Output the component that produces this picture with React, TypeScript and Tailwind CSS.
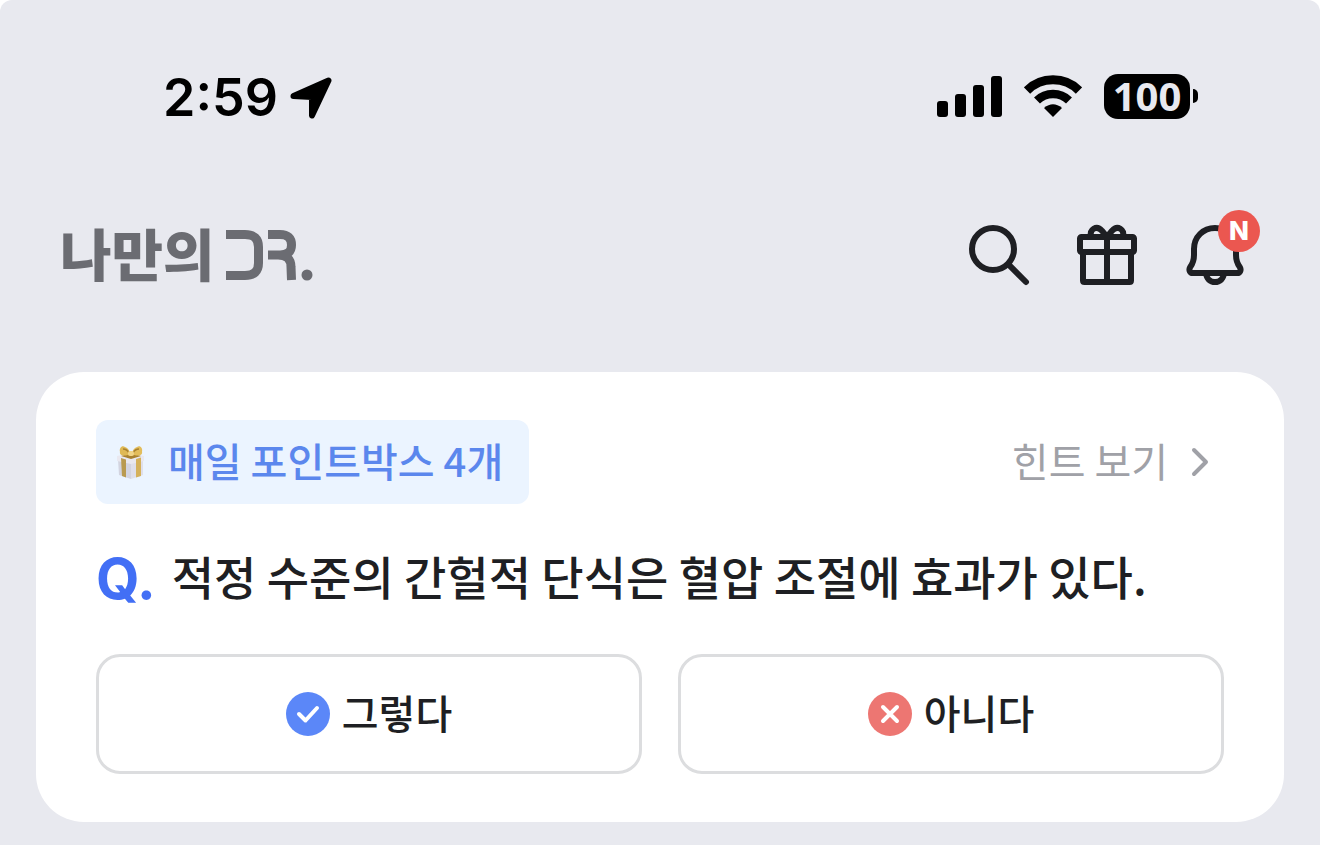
import React from "react";

interface AnswerButtonProps {
  label: string;
  children: React.ReactNode;
}

function AnswerButton({ label, children }: AnswerButtonProps) {
  return (
    <button
      type="button"
      className="flex h-[120px] items-center justify-center gap-3 rounded-3xl border-3 border-[#dcdddf] bg-white text-[40px] leading-[60px] font-medium"
    >
      {children}
      <span className="pb-1">{label}</span>
    </button>
  );
}

function StatusBar() {
  return (
    <div className="flex h-[50px] items-center justify-between pr-[122px] pl-[163px] text-black">
      <div className="flex items-center gap-3 pt-0.5">
        <span className="font-['Inter',sans-serif] text-[52px] leading-[60px] font-semibold">2:59</span>
        <svg className="h-[42px] w-[42px]" viewBox="0 0 42 42" aria-hidden="true">
          <path
            d="M3.500 19L38.500 3.500L22 38.500V20Z"
            fill="currentColor"
            stroke="currentColor"
            strokeWidth="6"
            strokeLinejoin="round"
          />
        </svg>
      </div>

      <div className="flex items-center pb-0.5">
        <svg className="h-[42px] w-[66px]" viewBox="0 0 66 42" fill="currentColor" aria-hidden="true">
          <rect x="1" y="26" width="11" height="16" rx="3" />
          <rect x="19" y="19" width="11" height="23" rx="3" />
          <rect x="37" y="10" width="11" height="32" rx="3" />
          <rect x="55" y="1" width="11" height="41" rx="3" />
        </svg>
        <svg className="ml-[22px] h-[42px] w-[58px]" viewBox="0 0 58 42" fill="none" stroke="currentColor" aria-hidden="true">
          <path d="M3 15.500A37 37 0 0 1 55 15.500" strokeWidth="9" />
          <path d="M13 25.500A23 23 0 0 1 45 25.500" strokeWidth="8.500" />
          <path d="M29 42L20 33Q29 25.500 38 33Z" fill="currentColor" stroke="none" />
        </svg>
        <div className="ml-[22px] flex items-center gap-[3px]">
          <span className="flex h-[45px] w-[86px] items-center justify-center rounded-[14px] bg-black pb-0.5 font-['Open_Sans',sans-serif] text-[40px] leading-[43px] font-bold text-[#e8e9ef]">
            100
          </span>
          <span className="h-[14px] w-[5px] rounded-r-full bg-black"></span>
        </div>
      </div>
    </div>
  );
}

function Header() {
  return (
    <header className="flex items-center justify-between pt-24 pr-[69px] pb-20 pl-[60px]">
      <a href="#" aria-label="나만의DR." className="flex items-center gap-2 text-[#6b6c72]">
        <span className="pb-1.5 text-[56px] leading-[68px] font-black">나만의</span>
        <svg className="h-[56px] w-[90px]" viewBox="0 0 90 56" fill="none" stroke="currentColor" strokeWidth="9" aria-hidden="true">
          <path d="M3 7.500H22Q35.500 7.500 35.500 20V36Q35.500 48.500 22 48.500H3" />
          <path d="M45 7.500H57Q68.500 7.500 68.500 18Q68.500 28 57 28H45H55Q68 28 68 40L68.500 53" />
          <circle cx="84" cy="48" r="5.500" fill="currentColor" stroke="none" />
        </svg>
      </a>

      <nav className="flex h-[74px] items-center gap-9">
        <button type="button" aria-label="검색">
          <svg className="size-[72px]" viewBox="0 0 24 24" fill="none" stroke="currentColor" strokeWidth="2" strokeLinecap="round">
            <circle cx="10" cy="10" r="7" />
            <path d="M15.300 15.300L21 21" />
          </svg>
        </button>
        <button type="button" aria-label="선물">
          <svg className="size-[72px]" viewBox="0 0 24 24" fill="none" stroke="currentColor" strokeWidth="2" strokeLinejoin="round">
            <rect x="3" y="6" width="18" height="5" rx="0.500" />
            <path d="M4 11V20.500Q4 21 4.500 21H19.500Q20 21 20 20.500V11M12 6V21" />
            <path d="M6.700 6C6 3.500 8.500 1.900 10.300 3.900L12 6L13.700 3.900C15.500 1.900 18 3.500 17.300 6" />
          </svg>
        </button>
        <button type="button" aria-label="알림" className="relative">
          <svg className="size-[72px]" viewBox="0 0 24 24" fill="none" stroke="currentColor" strokeWidth="2" strokeLinejoin="round">
            <path d="M12 3C8 3 5 6 5 10V12C5 14.200 4.500 15 3.700 16.100C3.200 17 3.600 18 4.600 18H19.400C20.400 18 20.800 17 20.300 16.100C19.500 15 19 14.200 19 12V10C19 6 16 3 12 3Z" />
            <path d="M9 18C9.200 20 10.400 21 12 21C13.600 21 14.800 20 15 18" />
          </svg>
          <span className="absolute -top-[9px] -right-[9px] flex size-[42px] items-center justify-center rounded-full bg-[#eb5750] font-['Inter',sans-serif] text-[26px] leading-none font-extrabold text-white">
            N
          </span>
        </button>
      </nav>
    </header>
  );
}

function GiftBox() {
  return (
    <svg className="h-[36px] w-[30px]" viewBox="0 0 30 36" aria-hidden="true">
      <path d="M2 15L15 19V35L3 31Z" fill="#d3d4e0" />
      <path d="M15 19L27 15V31L15 35Z" fill="#dfdfeb" />
      <path d="M1 12L15 9L28 12V17L15 20L1 17Z" fill="#e9e8f0" />
      <path d="M5 14L10 15.500V33.500L6 32Z" fill="#b99a50" />
      <path d="M20 15L25 13.500V32L20 33.500Z" fill="#d5b15c" />
      <path d="M5 12L15 9L25 12L15 15Z" fill="#a9812f" />
      <path d="M14 10C8 13 3 11 4 8C3 4 6 1 9 3C12 4 14 7 14 10Z" fill="#dfb955" />
      <path d="M16 10C22 13 27 11 26 8C27 4 24 1 21 3C18 4 16 7 16 10Z" fill="#e3bd5b" />
      <path d="M7 5C10 5 12 7 13 9M23 5C20 5 18 7 17 9" fill="none" stroke="#a9812f" strokeWidth="1.500" />
      <rect x="12" y="7" width="6" height="5" rx="2" fill="#f1d486" />
    </svg>
  );
}

export default function App() {
  return (
    <div className="min-h-screen bg-white font-['Noto_Sans_CJK_KR',sans-serif] text-[#1e1f23]">
      <div className="min-h-screen rounded-t-xl bg-[#e8e9ef] pt-18 pb-[23px]">
        <StatusBar />
        <Header />

        <main className="mx-9 rounded-[48px] bg-white px-15 py-12">
          <div className="flex items-center justify-between">
            <div className="flex h-[84px] items-center gap-[22px] rounded-xl bg-[#ebf4ff] pr-[26px] pl-5">
              <GiftBox />
              <span className="pb-1 text-[40px] leading-[60px] font-medium text-[#5b87ed]">매일 포인트박스 4개</span>
            </div>
            <a href="#" className="flex items-center gap-2 text-[40px] leading-[60px] text-[#a0a1a7]">
              <span className="pb-1">힌트 보기</span>
              <svg className="size-12" viewBox="0 0 48 48" fill="none" stroke="currentColor" strokeWidth="4" strokeLinecap="round" strokeLinejoin="round" aria-hidden="true">
                <path d="M18 12L30 24L18 36" />
              </svg>
            </a>
          </div>

          {/* Question */}
          <h1 className="my-[45px] flex items-start gap-4 text-[46px] font-medium">
            <span className="font-['Inter',sans-serif] text-[56px] leading-[60px] font-bold text-[#426ff5]">Q.</span>
            <span className="leading-[52px]">적정 수준의 간헐적 단식은 혈압 조절에 효과가 있다.</span>
          </h1>

          {/* Answers */}
          <div className="grid grid-cols-2 gap-9">
            <AnswerButton label="그렇다">
              <svg className="size-11" viewBox="0 0 44 44" fill="none" stroke="white" strokeWidth="4" strokeLinecap="round" strokeLinejoin="round" aria-hidden="true">
                <circle cx="22" cy="22" r="22" fill="#5b87f8" stroke="none" />
                <path d="M13 22L19.500 28.500L31 16" />
              </svg>
            </AnswerButton>
            <AnswerButton label="아니다">
              <svg className="size-11" viewBox="0 0 44 44" fill="none" stroke="white" strokeWidth="4" strokeLinecap="round" aria-hidden="true">
                <circle cx="22" cy="22" r="22" fill="#ed7672" stroke="none" />
                <path d="M15 15L29 29M29 15L15 29" />
              </svg>
            </AnswerButton>
          </div>
        </main>
      </div>
    </div>
  );
}
